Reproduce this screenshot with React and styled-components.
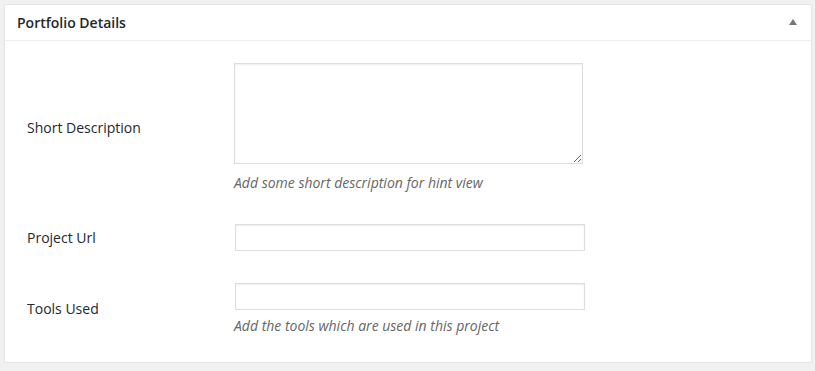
import React from 'react'
import styled, { createGlobalStyle } from 'styled-components'

const GlobalStyle = createGlobalStyle`
  html, body {
    margin: 0;
    padding: 0;
    background: #f1f1f1;
    font-family: "Open Sans", "Liberation Sans", sans-serif;
    color: #444;
  }
`

const Page = styled.div`
  padding: 4px 3px 0 4px;
`

const Box = styled.div`
  background: #fff;
  border: 1px solid #e5e5e5;
  box-shadow: 0 1px 1px rgba(0, 0, 0, 0.04);
`

const Header = styled.div`
  display: flex;
  align-items: center;
  justify-content: space-between;
  height: 35px;
  padding: 0 14px 0 12px;
  border-bottom: 1px solid #eee;
`

const Title = styled.h2`
  margin: 0;
  font-size: 14px;
  font-weight: 600;
  color: #23282d;
  line-height: 1.4;
`

const Toggle = styled.span`
  width: 0;
  height: 0;
  border-left: 4px solid transparent;
  border-right: 4px solid transparent;
  border-bottom: 6px solid #72777c;
  margin-top: -1px;
`

const Body = styled.div`
  display: flex;
  flex-direction: column;
  gap: 32px;
  padding: 22px 0 27px 22px;
`

const Row = styled.div`
  display: grid;
  grid-template-columns: 207px 1fr;
  align-items: center;
`

const Label = styled.label`
  font-size: 14px;
  color: #23282d;
  line-height: 20px;
`

const Field = styled.div`
  display: flex;
  flex-direction: column;
  align-items: flex-start;
`

const TextArea = styled.textarea`
  display: block;
  box-sizing: border-box;
  width: 349px;
  height: 101px;
  margin: 0 0 3px;
  border: 1px solid #ddd;
  box-shadow: inset 0 1px 2px rgba(0, 0, 0, 0.07);
  font-family: inherit;
  resize: vertical;
  outline: none;
`

const Input = styled.input`
  display: block;
  box-sizing: border-box;
  width: 350px;
  height: 27px;
  margin: 0 0 0 1px;
  border: 1px solid #ddd;
  box-shadow: inset 0 1px 2px rgba(0, 0, 0, 0.07);
  outline: none;
`

const Hint = styled.p`
  margin: 7px 0 0;
  font-size: 14px;
  font-style: italic;
  line-height: 18px;
  color: #666;
`

export default function App() {
  return (
    <>
      <GlobalStyle />
      <Page>
        <Box>
          <Header>
            <Title>Portfolio Details</Title>
            <Toggle />
          </Header>
          <Body>
            <Row>
              <Label>Short Description</Label>
              <Field>
                <TextArea />
                <Hint>Add some short description for hint view</Hint>
              </Field>
            </Row>
            <Row>
              <Label>Project Url</Label>
              <Field>
                <Input type="text" />
              </Field>
            </Row>
            <Row>
              <Label>Tools Used</Label>
              <Field>
                <Input type="text" />
                <Hint>Add the tools which are used in this project</Hint>
              </Field>
            </Row>
          </Body>
        </Box>
      </Page>
    </>
  )
}
